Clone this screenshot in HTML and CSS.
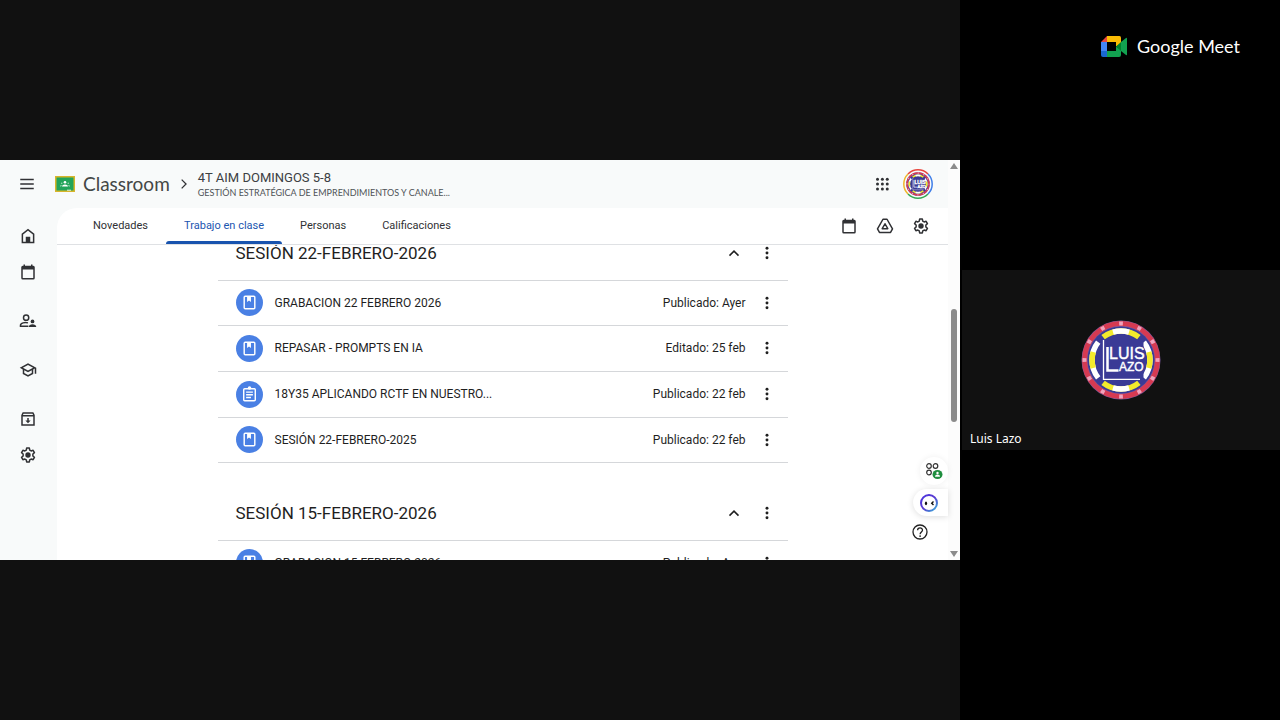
FILE: index.html
```html
<!DOCTYPE html>
<html lang="es">
<head>
<meta charset="utf-8">
<meta name="viewport" content="width=device-width, initial-scale=1">
<title>Google Meet</title>
<link rel="stylesheet" href="styles.css">
</head>
<body>
<svg class="defs" aria-hidden="true">
  <symbol id="calendar" viewBox="0 0 24 24"><path d="M19 3.500h-1V2h-2v1.500H8V2H6v1.500H5a2 2 0 0 0-2 2V20a2 2 0 0 0 2 2h14a2 2 0 0 0 2-2V5.500a2 2 0 0 0-2-2zm0 16.500H5V8.500h14z"/></symbol>
  <symbol id="gear" viewBox="0 0 24 24"><path fill="none" stroke="currentColor" stroke-width="2" stroke-linejoin="round" d="M10.200 2.800h3.600l.5 2.700 1.900 1.100 2.600-.9 1.800 3.100-2.100 1.800v2.800l2.100 1.800-1.800 3.100-2.600-.9-1.900 1.100-.5 2.700h-3.600l-.5-2.700-1.900-1.100-2.600.9-1.800-3.100 2.100-1.800v-2.800L3.400 8.800l1.800-3.100 2.600.9 1.900-1.100z"/><circle cx="12" cy="12" r="3.600"/></symbol>
  <symbol id="dots" viewBox="0 0 24 24"><circle cx="12" cy="5" r="2.200"/><circle cx="12" cy="12" r="2.200"/><circle cx="12" cy="19" r="2.200"/></symbol>
  <symbol id="up" viewBox="0 0 24 24"><path fill="none" stroke="currentColor" stroke-width="2" d="M6 15.500l6-6 6 6"/></symbol>
  <symbol id="book" viewBox="0 0 28 28"><circle cx="14" cy="14" r="14" fill="#4a80e4"/><rect x="8.500" y="7.500" width="11" height="13" rx="1" fill="none" stroke="#fff" stroke-width="1.500"/><path fill="#fff" d="M11.500 7.500h4v6l-2-1.500-2 1.500z"/></symbol>
  <symbol id="task" viewBox="0 0 28 28"><circle cx="14" cy="14" r="14" fill="#4a80e4"/><rect x="8" y="8" width="12" height="12.500" rx="1" fill="none" stroke="#fff" stroke-width="1.500"/><path fill="none" stroke="#fff" stroke-width="1.400" d="M10.500 11.500h7M10.500 14.300h7M10.500 17.100h5"/><circle cx="14" cy="7.300" r="1.800" fill="#fff"/></symbol>
  <symbol id="badge" viewBox="0 0 80 80">
    <circle cx="40" cy="40" r="39.500" fill="#7a5a9c"/>
    <circle cx="40" cy="40" r="36.500" fill="none" stroke="#d63a52" stroke-width="5"/>
    <circle cx="40" cy="40" r="36.500" fill="none" stroke="#efa3bd" stroke-width="4" pathLength="120" stroke-dasharray="2 8" stroke-dashoffset="1"/>
    <circle cx="40" cy="40" r="33.500" fill="#3a3a96"/>
    <g fill="none" stroke-width="5.500">
      <path stroke="#f3ea2c" d="M22.100 17.200a29 29 0 0 1 35.800 0M22.100 62.800a29 29 0 0 0 35.800 0"/>
      <path stroke="#fff" d="M32 12.200a29 29 0 0 1 16 0M32 67.800a29 29 0 0 0 16 0"/>
      <path stroke="#fff" d="M17.200 22.100a29 29 0 0 0 0 35.800M62.800 22.100a29 29 0 0 1 0 35.800"/>
      <path stroke="#f3ea2c" d="M12.200 32a29 29 0 0 0 0 16M67.800 32a29 29 0 0 1 0 16"/>
    </g>
    <path fill="#3a3a96" d="M20.500 20h42v40h-42z"/>
    <path fill="none" stroke="#fff" stroke-width="1.300" d="M22.500 20v39.300H59"/>
    <path fill="none" stroke="#fff" stroke-width="2.500" d="M26.500 27v23.500h11"/>
  </symbol>
</svg>
<main class="call">
  <section class="stage">
    <div class="classroom">
      <div class="app">
        <header class="topbar">
          <button class="icon-btn" aria-label="Menú"><svg class="icon" viewBox="0 0 24 24"><path d="M3 5h18v2H3zM3 11h18v2H3zM3 17h18v2H3z"/></svg></button>
          <svg class="logo" viewBox="0 0 20 16" aria-hidden="true"><path fill="#d8b52a" d="M0 0h20v16H0z"/><path fill="#23a45a" d="M1.500 1.500h17v13h-17z"/><circle cx="10" cy="6.200" r="1.300" fill="#fff"/><circle cx="6.700" cy="7.300" r=".8" fill="#9bd8b4"/><circle cx="13.300" cy="7.300" r=".8" fill="#9bd8b4"/><path fill="#fff" d="M7 10.500c0-2.700 6-2.700 6 0z"/><path fill="#9bd8b4" d="M5 10.500c0-1.200.8-1.600 1.800-1.600l-.6 1.600zM15 10.500c0-1.200-.8-1.600-1.800-1.600l.6 1.600z"/><path fill="#f1f1d8" d="M12 13.700h4v1h-4z"/></svg>
          <a class="brand" href="#">Classroom</a>
          <svg class="crumb" viewBox="0 0 24 24" aria-hidden="true"><path fill="none" stroke="currentColor" stroke-width="2.200" d="M8 4.500l7.500 7.500L8 19.500"/></svg>
          <div class="course"><h1>4T AIM DOMINGOS 5-8</h1><p>GESTIÓN ESTRATÉGICA DE EMPRENDIMIENTOS Y CANALE...</p></div>
          <button class="icon-btn" aria-label="Aplicaciones"><svg class="icon" viewBox="0 0 24 24"><g><circle cx="6" cy="5.500" r="2"/><circle cx="12.500" cy="5.500" r="2"/><circle cx="19" cy="5.500" r="2"/><circle cx="6" cy="12" r="2"/><circle cx="12.500" cy="12" r="2"/><circle cx="19" cy="12" r="2"/><circle cx="6" cy="18.500" r="2"/><circle cx="12.500" cy="18.500" r="2"/><circle cx="19" cy="18.500" r="2"/></g></svg></button>
          <button class="icon-btn" aria-label="Cuenta"><svg class="account" viewBox="0 0 30 30"><g fill="none" stroke-width="1.500"><path stroke="#e8453c" d="M5 5a14 14 0 0 1 20 0"/><path stroke="#3f7ee8" d="M25 5a14 14 0 0 1 0 20"/><path stroke="#34a853" d="M25 25a14 14 0 0 1-20 0"/><path stroke="#efb62b" d="M5 25a14 14 0 0 1 0-20"/></g><use href="#badge" x="3" y="3" width="24" height="24"/><text class="badge-text" x="11.500" y="15" font-size="5">LUIS</text><text class="badge-text" x="14.500" y="19" font-size="4">AZO</text></svg></button>
        </header>
        <nav class="rail" aria-label="Principal">
          <button class="icon-btn" aria-label="Página principal"><svg class="icon" viewBox="0 0 24 24"><path fill="none" stroke="currentColor" stroke-width="2" d="M4.500 20.500v-11L12 3.500l7.500 6v11z"/><path d="M9 13h6v8H9z"/></svg></button>
          <button class="icon-btn" aria-label="Calendario"><svg class="icon"><use href="#calendar"/></svg></button>
          <button class="icon-btn gap" aria-label="Cursos que impartes"><svg class="icon" viewBox="0 0 24 24"><g fill="none" stroke="currentColor" stroke-width="2"><circle cx="9.500" cy="7.500" r="3.500"/><path d="M12.500 19H2v-1.500c0-3 6-4 10-3"/></g><circle cx="18" cy="12.500" r="2.500"/><path d="M13 20c0-5 10-5 10 0z"/></svg></button>
          <button class="icon-btn gap" aria-label="Cursos en los que te registraste"><svg class="icon" viewBox="0 0 24 24"><path d="M12 3L1 9l4 2.180v6L12 21l7-3.820v-6l2-1.090V17h2V9L12 3zm6.820 6L12 12.720 5.180 9 12 5.280 18.820 9zM17 15.990l-5 2.730-5-2.730v-3.720L12 15l5-2.730v3.720z"/></svg></button>
          <button class="icon-btn gap" aria-label="Clases archivadas"><svg class="icon" viewBox="0 0 24 24"><g fill="none" stroke="currentColor" stroke-width="2"><path d="M4 7l1.500-3h13L20 7v13H4zM4 7.500h16"/></g><path d="M11 10.500h2v3.500h2.500L12 17.500 8.500 14H11z"/></svg></button>
          <button class="icon-btn" aria-label="Configuración"><svg class="icon"><use href="#gear"/></svg></button>
        </nav>
        <section class="panel">
          <div class="tabs">
            <nav class="tab-list">
              <a class="tab" href="#">Novedades</a>
              <a class="tab active" href="#" aria-current="page">Trabajo en clase</a>
              <a class="tab" href="#">Personas</a>
              <a class="tab" href="#">Calificaciones</a>
            </nav>
            <button class="icon-btn" aria-label="Calendario del curso"><svg class="icon"><use href="#calendar"/></svg></button>
            <button class="icon-btn" aria-label="Carpeta de Drive"><svg class="icon" viewBox="0 0 24 24"><g fill="none" stroke="currentColor" stroke-width="2" stroke-linejoin="round"><path d="M9.300 3h5.400L22 15.800 19.400 20.500H4.600L2 15.800z"/><path d="M12 9l3.700 6.500H8.300z"/></g></svg></button>
            <button class="icon-btn" aria-label="Configuración del curso"><svg class="icon"><use href="#gear"/></svg></button>
          </div>
          <div class="scroller">
            <div class="topics">
              <section class="topic">
                <header class="topic-head"><h2>SESIÓN 22-FEBRERO-2026</h2><button class="icon-btn" aria-label="Contraer"><svg class="icon"><use href="#up"/></svg></button><button class="more" aria-label="Opciones"><svg class="icon"><use href="#dots"/></svg></button></header>
                <ul class="posts">
                  <li class="post"><svg class="kind"><use href="#book"/></svg><span class="name">GRABACION 22 FEBRERO 2026</span><span>Publicado: Ayer</span><button class="more" aria-label="Opciones"><svg class="icon"><use href="#dots"/></svg></button></li>
                  <li class="post"><svg class="kind"><use href="#book"/></svg><span class="name">REPASAR - PROMPTS EN IA</span><span>Editado: 25 feb</span><button class="more" aria-label="Opciones"><svg class="icon"><use href="#dots"/></svg></button></li>
                  <li class="post"><svg class="kind"><use href="#task"/></svg><span class="name">18Y35 APLICANDO RCTF EN NUESTRO...</span><span>Publicado: 22 feb</span><button class="more" aria-label="Opciones"><svg class="icon"><use href="#dots"/></svg></button></li>
                  <li class="post"><svg class="kind"><use href="#book"/></svg><span class="name">SESIÓN 22-FEBRERO-2025</span><span>Publicado: 22 feb</span><button class="more" aria-label="Opciones"><svg class="icon"><use href="#dots"/></svg></button></li>
                </ul>
              </section>
              <section class="topic">
                <header class="topic-head"><h2>SESIÓN 15-FEBRERO-2026</h2><button class="icon-btn" aria-label="Contraer"><svg class="icon"><use href="#up"/></svg></button><button class="more" aria-label="Opciones"><svg class="icon"><use href="#dots"/></svg></button></header>
                <ul class="posts">
                  <li class="post"><svg class="kind"><use href="#book"/></svg><span class="name">GRABACION 15 FEBRERO 2026</span><span>Publicado: Ayer</span><button class="more" aria-label="Opciones"><svg class="icon"><use href="#dots"/></svg></button></li>
                </ul>
              </section>
            </div>
          </div>
        </section>
        <div class="floating">
          <button class="float round" aria-label="Complementos"><svg viewBox="0 0 18 18"><g fill="none" stroke="#333" stroke-width="1.200"><circle cx="4" cy="4" r="2.300"/><circle cx="10.500" cy="4" r="2.300"/><circle cx="4" cy="10.500" r="2.300"/></g><ellipse cx="12.500" cy="12.500" rx="5" ry="4.500" fill="#1e8e3e"/><circle cx="12.500" cy="11" r="1.200" fill="#fff"/><path fill="#fff" d="M10 14.700c0-3 5-3 5 0z"/></svg></button>
          <button class="float pill" aria-label="Asistente"><svg viewBox="0 0 18 18"><defs><linearGradient id="ring" x1="0" y1="0" x2="1" y2="1"><stop offset="0" stop-color="#4a35e0"/><stop offset=".5" stop-color="#5a3ad0"/><stop offset="1" stop-color="#38b8dc"/></linearGradient></defs><circle cx="9" cy="9" r="8" fill="none" stroke="url(#ring)" stroke-width="2"/><ellipse cx="6" cy="9.300" rx="1.100" ry="1.900" fill="#111"/><path fill="none" stroke="#111" stroke-width="1.400" d="M13.500 7.500l-1.800 1.800 1.800 1.800"/></svg></button>
          <button class="float help" aria-label="Ayuda"><svg viewBox="0 0 18 18"><g fill="none" stroke="#222" stroke-width="1.300"><circle cx="9" cy="9" r="7"/><path d="M6.600 7.300c0-3.200 4.900-3.200 4.900 0 0 1.700-2.400 1.900-2.400 4"/></g><circle cx="9.100" cy="13.100" r=".9" fill="#222"/></svg></button>
        </div>
      </div>
      <div class="scrollbar" aria-hidden="true"><span class="arrow"></span><span class="thumb"></span><span class="arrow down"></span></div>
    </div>
  </section>
  <aside class="people">
    <div class="meet"><svg class="meet-logo" viewBox="0 0 26 21" aria-hidden="true"><path fill="#e8453c" d="M6 0v6H0z"/><path fill="#fbbc04" d="M6 0h12.500Q20 0 20 2v6l-5 2.500V6H6z"/><path fill="#4285f4" d="M0 6h6v9H0z"/><path fill="#1967d2" d="M0 15h6v6H2Q0 21 0 19z"/><path fill="#12a150" d="M6 15h9v-4.500l5 3V19q0 2-2 2H6z"/><path fill="#00832d" d="M15 10.500L20 6v9z"/><path fill="#12a150" d="M20 6l5-4q1-.6 1 .5v16q0 1-1 .5l-5-4z"/></svg><span>Google Meet</span></div>
    <article class="tile"><svg class="face" viewBox="0 0 80 80" role="img" aria-label="Luis Lazo"><use href="#badge"/><text class="badge-text" x="28" y="39" font-size="16">LUIS</text><text class="badge-text" x="38" y="51" font-size="12">AZO</text></svg><span class="who">Luis Lazo</span></article>
  </aside>
</main>
</body>
</html>
```
FILE: styles.css
```css
* { box-sizing: border-box; }
body { margin: 0; background: #000; color: #202124; font-family: Lato, "Open Sans", sans-serif; font-size: 12px; }
h1, h2, p, ul { margin: 0; padding: 0; font-weight: 400; }
ul { list-style: none; }
button { border: 0; padding: 0; background: none; color: inherit; cursor: pointer; }
a { color: inherit; text-decoration: none; }
svg { display: block; fill: currentColor; }
.defs { position: absolute; width: 0; height: 0; }
.badge-text { font-family: "Liberation Sans", sans-serif; fill: #fff; stroke: #fff; stroke-width: .4px; }

.call { display: grid; grid-template-columns: 3fr 1fr; min-height: 100vh; }
.stage { display: grid; align-items: center; background: #111; min-width: 0; }
.classroom { display: flex; aspect-ratio: 12 / 5; overflow: hidden; background: #f8fafa; }
.app { position: relative; flex: 1; min-width: 0; min-height: 0; display: grid; grid-template: 48px minmax(0, 1fr) / 57px minmax(0, 1fr); color: #303134; }

.icon { width: 18px; height: 18px; }
.icon-btn { display: grid; place-items: center; width: 36px; height: 36px; flex: none; }
.more { display: grid; place-items: center; width: 18px; height: 36px; margin-left: 12px; flex: none; }
.more .icon { width: 16px; height: 16px; }

.topbar { grid-column: 1 / -1; display: flex; align-items: center; padding: 0 12px 0 9px; }
.logo { width: 20px; height: 16px; margin-left: 10px; }
.brand { margin-left: 8px; font-size: 19px; line-height: 24px; color: #444746; }
.crumb { width: 14px; height: 14px; margin: 0 7px; }
.course { flex: 1; min-width: 0; }
.course h1 { font-family: Roboto, sans-serif; font-size: 13px; line-height: 16px; color: #3c4043; }
.course p { font-size: 9px; line-height: 13px; color: #4f5357; white-space: nowrap; }
.account { width: 30px; height: 30px; }

.rail { display: flex; flex-direction: column; padding: 10px 0 0 10px; }
.gap { margin-top: 13px; }

.panel { display: flex; flex-direction: column; min-height: 0; overflow: hidden; background: #fff; border-top-left-radius: 20px; }
.tabs { display: flex; flex: none; height: 37px; padding: 0 9px 0 18px; border-bottom: 1px solid #dfe1e4; }
.tab-list { display: flex; flex: 1; }
.tab { position: relative; padding: 0 18px; font-family: Roboto, sans-serif; font-size: 11px; line-height: 36px; }
.active { color: #1c56b0; }
.active::after { content: ""; position: absolute; inset: auto 0 0; height: 3px; border-radius: 3px 3px 0 0; background: #1853ae; }

.scroller { flex: 1; min-height: 0; overflow: hidden; }
.topics { max-width: 570px; margin: -20px auto 0; color: #1f1f1f; font-family: Roboto, sans-serif; }
.topic { margin-bottom: 22px; }
.topic-head, .post { display: flex; align-items: center; border-bottom: 1px solid #d5d7da; padding: 0 12px 0 18px; }
.topic-head { height: 56px; }
.topic-head h2 { flex: 1; font-size: 17px; }
.topic-head .more { margin-left: 6px; }
.post { height: 46px; padding-bottom: 1px; font-size: 12px; }
.post:nth-child(4n + 1), .post:nth-child(4n) { height: 45px; }
.kind { width: 27px; height: 27px; margin-right: 12px; flex: none; }
.name { flex: 1; }

.floating { position: absolute; right: 0; bottom: 16px; display: flex; flex-direction: column; align-items: flex-end; gap: 4px; }
.float { display: grid; place-items: center; }
.float svg { width: 18px; height: 18px; }
.round { width: 28px; height: 28px; border-radius: 14px; background: #fff; box-shadow: 0 0 6px #0001; }
.pill { width: 35px; height: 27px; padding-right: 4px; border-radius: 14px 0 0 14px; background: #fff; box-shadow: 0 1px 6px #0002; }
.help { width: 24px; height: 24px; margin-right: 16px; }

.scrollbar { flex: none; width: 12px; display: flex; flex-direction: column; align-items: center; padding: 3px 0; background: #fcfcfc; }
.arrow { border: 4px solid transparent; border-top: 0; border-bottom: 6px solid #8b8b8b; }
.down { transform: rotate(180deg); margin-top: auto; }
.thumb { width: 6px; height: 113px; margin-top: 140px; border-radius: 3px; background: #8b8b8b; }

.people { position: relative; display: grid; align-items: center; color: #fff; }
.meet { position: absolute; top: 32px; right: 40px; display: flex; align-items: center; gap: 10px; font-size: 18px; line-height: 28px; }
.meet-logo { width: 26px; height: 21px; }
.tile { position: relative; display: grid; place-items: center; aspect-ratio: 53 / 30; margin-left: 2px; background: #111; }
.face { width: 80px; height: 80px; }
.who { position: absolute; left: 8px; bottom: 3px; font-family: "Noto Sans", sans-serif; font-size: 12px; }
```
